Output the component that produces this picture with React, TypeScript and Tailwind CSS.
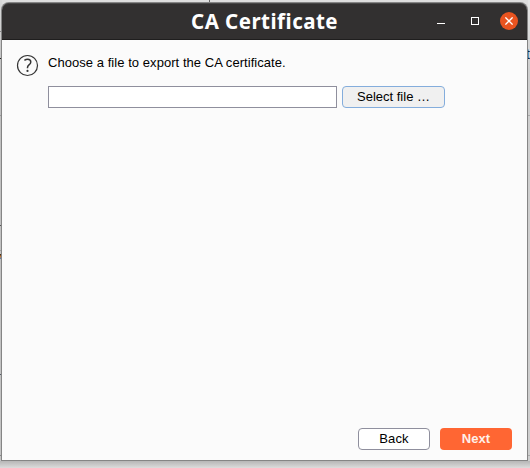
function Backdrop() {
  return (
    <div className="absolute inset-0 overflow-hidden bg-[#dedede]" aria-hidden="true">
      <div className="absolute left-0 top-0 h-full w-0.5 bg-linear-to-b from-[#dadada] via-[#c0c0c0] via-15% to-[#c4c4c4]" />
      <div className="absolute right-0 top-0 h-full w-0.5 bg-linear-to-b from-[#e6e6e6] via-[#cecece] via-15% to-[#cecece]" />
      <div className="absolute bottom-0 left-0 h-[7px] w-full bg-linear-to-b from-[#b6b6b6] to-[#dcdcdc]" />
      <div className="absolute left-[209px] top-0 h-[3px] w-px bg-[#666]" />
      <div className="absolute left-0 top-[31px] h-px w-0.5 bg-[#888]" />
      <div className="absolute left-0 top-[58px] h-px w-0.5 bg-[#222]" />
      <div className="absolute left-0 top-[115px] h-px w-0.5 bg-[#999]" />
      <div className="absolute left-0 top-[225px] h-px w-0.5 bg-[#555]" />
      <div className="absolute left-0 top-[250px] h-px w-0.5 bg-[#a0a0a0]" />
      <div className="absolute left-0 top-[254px] h-[5px] w-0.5 bg-linear-to-b from-[#2b2010] via-[#c87832] to-[#3e79b8]" />
      <div className="absolute left-0 top-[374px] h-px w-0.5 bg-[#555b66]" />
      <div className="absolute left-0 top-[455px] h-px w-0.5 bg-[#888]" />
      <div className="absolute right-0 top-[115px] h-px w-0.5 bg-[#aaa]" />
      <div className="absolute right-0 top-[455px] h-px w-0.5 bg-[#aaa]" />
      <span className="absolute left-[526px] top-[47px] text-[14px] leading-[15px] text-[#10263e]">t</span>
    </div>
  );
}

function TitleBar() {
  return (
    <header className="flex h-[37px] shrink-0 items-center rounded-t-[7px] border-b border-[#1f1e1e] bg-[#323030] shadow-[inset_0_1px_0_#484747]">
      <h1 className="ml-[189px] w-[148px] whitespace-nowrap font-['Noto_Sans','Open_Sans',sans-serif] text-[20.5px] font-bold leading-9 tracking-[0.48px] text-white">
        CA Certificate
      </h1>
      <div className="ml-auto flex items-center">
        <button aria-label="Minimize" className="mr-[26px] flex h-2 w-2 items-end pb-px">
          <span className="h-px w-2 bg-white" />
        </button>
        <button aria-label="Maximize" className="mr-[21px] h-2 w-2 border border-white" />
        <button aria-label="Close" className="mr-[9px] flex size-[18px] items-center justify-center rounded-full bg-[#e95420]">
          <svg viewBox="0 0 8 8" className="size-2" stroke="white" strokeWidth="1.3" fill="none">
            <path d="M.4.4 7.6 7.6M7.6.4.4 7.6" />
          </svg>
        </button>
      </div>
    </header>
  );
}

export default function App() {
  return (
    <main className="relative h-[468px] w-[530px] overflow-hidden pl-0.5 pt-[3px] font-['Liberation_Sans',Arial,sans-serif] text-[13px] text-black">
      <Backdrop />
      <section className="relative flex h-[457px] w-[525px] flex-col rounded-t-[7px] bg-[#fbfbfb] shadow-[0_0_0_1px_#858585]">
        <TitleBar />
        <div className="flex flex-1 items-start pl-3.5 pt-3.5">
          <svg viewBox="0 0 23 23" className="size-[23px]" fill="none" stroke="#353535" strokeWidth="1.2">
            <circle cx="11.5" cy="11.5" r="10" />
            <path d="M8.4 6.3C9.4 5.6 10.4 5.2 11.6 5.2c2 0 3.2 1.1 3.2 2.8 0 1.4-.8 2.1-1.8 2.9-1.1.9-1.5 1.4-1.5 2.6v.7" strokeWidth="1.5" />
            <circle cx="11.5" cy="16.9" r="1.1" fill="#353535" stroke="none" />
          </svg>
          <div className="ml-[9px] flex flex-col">
            <label htmlFor="path" className="mt-px h-[31px] whitespace-nowrap leading-[15px] tracking-[0.05px]">
              Choose a file to export the CA certificate.
            </label>
            <div className="flex gap-[5px]">
              <input id="path" className="h-[22px] w-[289px] border border-[#8f8f9d] bg-white px-1 outline-none" />
              <button className="h-[22px] w-[103px] rounded-[4px] border border-[#84addc] bg-[#f0f0f0] leading-5">
                Select file …
              </button>
            </div>
          </div>
        </div>
        <footer className="flex justify-end gap-2.5 pb-2.5 pr-[15px]">
          <button className="h-[22px] w-[72px] rounded-[4px] border border-[#8f8f9d] bg-white leading-5 tracking-[0.1px]">Back</button>
          <button className="h-[22px] w-[72px] rounded-[4px] bg-[#ff6633] font-bold leading-[22px] tracking-[0.1px] text-[#fff0e8]">Next</button>
        </footer>
      </section>
    </main>
  );
}
